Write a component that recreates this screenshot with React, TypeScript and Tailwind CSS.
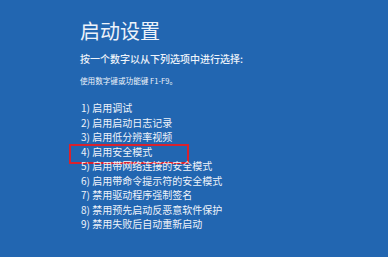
const options = [
  "1) 启用调试",
  "2) 启用启动日志记录",
  "3) 启用低分辨率视频",
  "4) 启用安全模式",
  "5) 启用带网络连接的安全模式",
  "6) 启用带命令提示符的安全模式",
  "7) 禁用驱动程序强制签名",
  "8) 禁用预先启动反恶意软件保护",
  "9) 禁用失败后自动重新启动",
];

export default function App() {
  return (
    <div className="w-[388px] h-[257px] overflow-hidden bg-[#2266b1] text-[#eef3fa] font-['Noto_Sans_CJK_SC',sans-serif] pl-[80px] pt-[21px]">
      {/* Title */}
      <h1 className="text-[20px] leading-[20px] font-normal">启动设置</h1>

      <p className="mt-[13px] text-[10px] leading-[10px] font-medium">按一个数字以从下列选项中进行选择:</p>

      <p className="mt-[13px] text-[7.6px] leading-[8px]">使用数字键或功能键 F1-F9。</p>

      {/* Options */}
      <ul className="mt-[16px] pl-px">
        {options.map((item, i) => (
          <li key={item} className="relative text-[10px] leading-[14.5px] whitespace-nowrap">
            {item}
            {i === 3 && (
              <span className="absolute left-[-12px] top-[-1px] w-[120px] h-[20px] border-2 border-[#d8222e] pointer-events-none"></span>
            )}
          </li>
        ))}
      </ul>
    </div>
  );
}
